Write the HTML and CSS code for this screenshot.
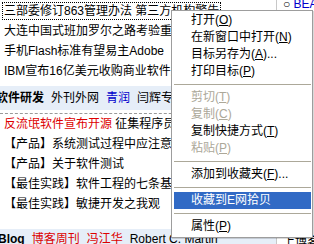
FILE: index.html
```html
<!DOCTYPE html>
<html lang="zh-CN">
<head>
  <meta charset="UTF-8" />
  <title>软件研发</title>
  <link rel="stylesheet" href="styles.css">
</head>
<body>
  <div class="page">
    <div class="main">
      <ul class="news">
        <li><a class="focus">三部委修订863管理办法 第三方机构警告</a></li>
        <li><a>大连中国式班加罗尔之路考验重重</a></li>
        <li><a>手机Flash标准有望易主Adobe</a></li>
        <li><a>IBM宣布16亿美元收购商业软件厂商</a></li>
      </ul>
      <div class="bar">
        <b>软件研发</b><span>外刊外网</span><span class="blue">青润</span><span>闫辉专栏</span>
      </div>
      <ul class="list">
        <li><span class="red">反流氓软件宣布开源</span> 征集程序员</li>
        <li>【产品】系统测试过程中应注意的问题</li>
        <li>【产品】关于软件测试</li>
        <li>【最佳实践】软件工程的七条基本原理</li>
        <li>【最佳实践】敏捷开发之我观</li>
      </ul>
      <div class="bar blog">
        <b>Blog</b><span class="red">博客周刊</span><span class="red">冯江华</span><span>Robert C. Martin</span>
      </div>
    </div>
    <div class="side">
      <p class="side-top">○ <span class="blue">BEA</span></p>
      <p class="side-bottom">上博客</p>
    </div>
  </div>

  <ul class="menu">
    <li>打开(<u>O</u>)</li>
    <li>在新窗口中打开(<u>N</u>)</li>
    <li>目标另存为(<u>A</u>)...</li>
    <li>打印目标(<u>P</u>)</li>
    <li class="sep"></li>
    <li class="off">剪切(<u>T</u>)</li>
    <li class="off">复制(<u>C</u>)</li>
    <li>复制快捷方式(<u>T</u>)</li>
    <li class="off">粘贴(<u>P</u>)</li>
    <li class="sep"></li>
    <li>添加到收藏夹(<u>F</u>)...</li>
    <li class="sep"></li>
    <li class="active">收藏到E网拾贝</li>
    <li class="sep"></li>
    <li>属性(<u>P</u>)</li>
  </ul>
</body>
</html>
```

FILE: styles.css
```css
body {
  margin: 0;
  background: #fff;
  color: #000;
  font: 12px "Liberation Sans", "Noto Sans CJK SC", sans-serif;
  overflow: hidden;
}

ul {
  list-style: none;
  margin: 0;
  padding: 0;
}

p {
  margin: 0;
}

.page {
  display: flex;
  height: 244px;
}

.main {
  width: 276px;
  flex: none;
  overflow: hidden;
  white-space: nowrap;
}

.news {
  padding-top: 1px;
}

.news li,
.list li {
  height: 20px;
  line-height: 20px;
  padding-left: 4px;
}

.focus {
  outline: 1px dotted #000;
  outline-offset: 1px;
}

.bar {
  margin-top: 5px;
  height: 24px;
  line-height: 24px;
  background: #e6eef8;
  text-indent: -4px;
}

.bar span {
  margin-left: 7px;
}

.list {
  margin-top: 3px;
  border-top: 1px dashed #999;
}

.blog {
  margin-top: 15px;
  height: 20px;
  line-height: 20px;
  text-indent: -2px;
}

.blue {
  color: #0000cc;
}

.red {
  color: #dd0000;
}

.side {
  flex: 1;
  border-left: 1px solid #c8c8c8;
  display: flex;
  flex-direction: column;
  justify-content: space-between;
  white-space: nowrap;
  overflow: hidden;
  padding-left: 6px;
}

.side-top {
  margin-top: -6px;
  line-height: 20px;
}

.side-bottom {
  line-height: 20px;
  margin-bottom: -8px;
}

.menu {
  position: absolute;
  left: 171px;
  top: 10px;
  width: 142px;
  box-sizing: border-box;
  border: 1px solid #9d9d9d;
  padding: 1px 1px 2px 2px;
  background: #fff;
  box-shadow: 1px 1px 0 rgba(0, 0, 0, 0.15);
}

.menu li {
  height: 17px;
  line-height: 17px;
  padding-left: 17px;
  white-space: nowrap;
}

.menu .sep {
  height: 0;
  margin: 4px 0;
  border-top: 1px solid #aca899;
}

.menu .off {
  color: #aca899;
}

.menu .active {
  background: #316ac5;
  color: #fff;
}
```
